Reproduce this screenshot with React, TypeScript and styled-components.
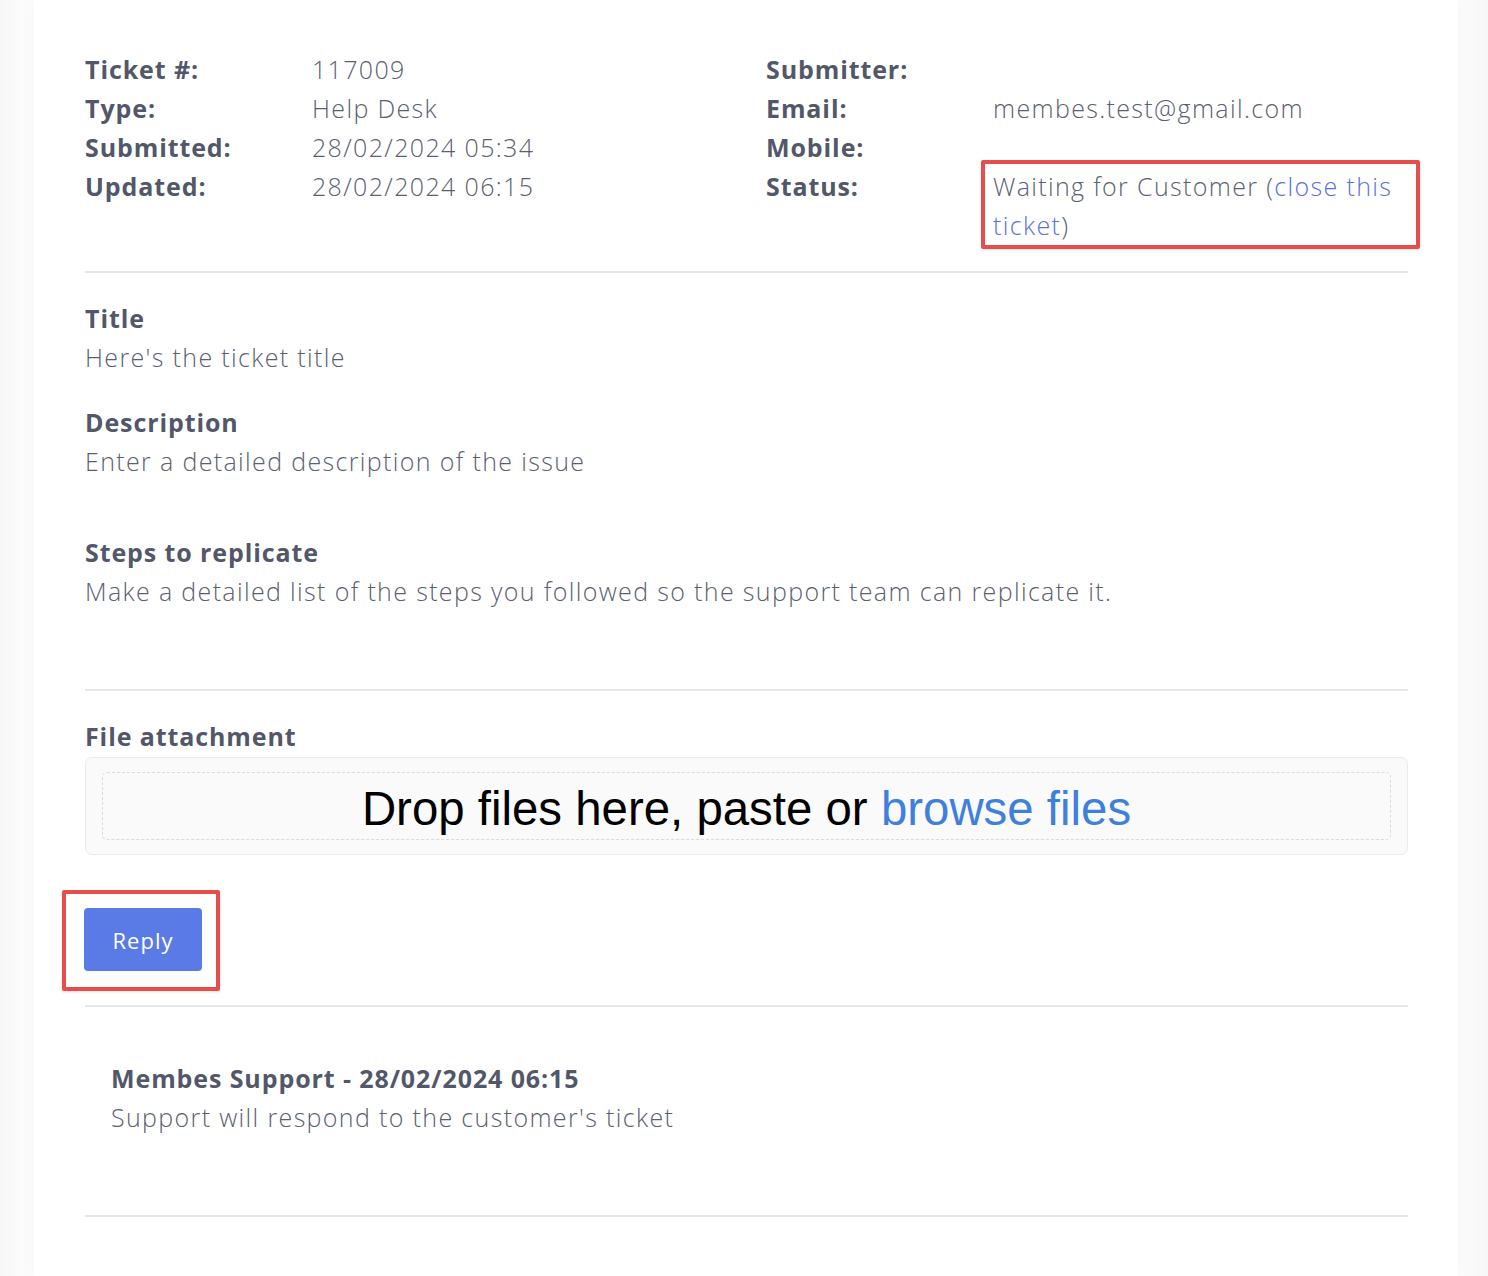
import React from "react";
import styled, { createGlobalStyle } from "styled-components";

const GlobalStyle = createGlobalStyle`
  html, body { margin: 0; padding: 0; background: #ffffff; }
  body { font-family: "Open Sans", "Noto Sans", sans-serif; }
  * { box-sizing: border-box; }
`;

const Page = styled.div`
  display: flex;
  justify-content: flex-start;
  padding: 0 30px 0 34px;
  min-height: 1276px;
  background: linear-gradient(90deg, #f7f7f7 0, #fdfdfd 34px, #fdfdfd calc(100% - 34px), #f7f7f7 100%);
`;

const Card = styled.main`
  width: 1424px;
  min-height: 1276px;
  background: #ffffff;
  box-shadow: 0 0 14px rgba(0, 0, 0, 0.035);
  padding: 50px 50px 0 51px;
  color: #5b5f72;
  font-size: 25px;
  line-height: 39px;
`;

const MetaGrid = styled.section`
  display: grid;
  grid-template-columns: 1fr 1fr;
  column-gap: 39px;
`;

const InfoTable = styled.dl`
  display: grid;
  grid-template-columns: 227px 1fr;
  margin: 0;
  align-content: start;
`;

const Label = styled.dt`
  margin: 0;
  font-weight: 700;
  letter-spacing: 0.9px;
  color: #525769;
`;

const Value = styled.dd`
  margin: 0;
  font-weight: 300;
  letter-spacing: 1.35px;
  color: #5b5f72;
  min-height: 39px;
  position: relative;
`;

const Highlight = styled.span`
  position: relative;
  display: block;
  &::after {
    content: "";
    position: absolute;
    top: -7px;
    bottom: -4px;
    left: -12px;
    right: -12px;
    border: 4px solid #e64d4d;
    border-radius: 2px;
    box-shadow: 0 1px 3px rgba(0, 0, 0, 0.12);
    pointer-events: none;
  }
`;

const Link = styled.a`
  color: #5b6fe0;
  text-decoration: none;
`;

const Divider = styled.hr<{ $top: number; $bottom: number }>`
  border: 0;
  height: 2px;
  background: #e6e6e6;
  margin: ${(p) => p.$top}px 0 ${(p) => p.$bottom}px;
`;

const Field = styled.div<{ $after?: number; $indent?: number }>`
  margin-bottom: ${(p) => p.$after ?? 0}px;
  padding-left: ${(p) => p.$indent ?? 0}px;
`;

const FieldLabel = styled.div`
  font-weight: 700;
  letter-spacing: 0.9px;
  color: #525769;
`;

const FieldValue = styled.div`
  font-weight: 300;
  letter-spacing: 1.35px;
  color: #5b5f72;
`;

const DropZone = styled.div`
  margin-top: 1px;
  height: 98px;
  background: #fafafa;
  border: 1px solid #eaeaea;
  border-radius: 7px;
  padding: 14px 16px;
`;

const DropInner = styled.div`
  height: 100%;
  border: 1px dashed #dadada;
  border-radius: 5px;
  display: flex;
  align-items: center;
  justify-content: center;
  font-family: "Liberation Sans", Arial, sans-serif;
  font-size: 47.4px;
  line-height: 1;
  letter-spacing: 0;
  color: #000000;
  padding-top: 6px;
`;

const Browse = styled.span`
  color: #3e80dc;
  margin-left: 0.28em;
`;

const ButtonRow = styled.div`
  display: flex;
  margin-top: 53px;
  margin-left: -1px;
`;

const ButtonHighlight = styled.div`
  position: relative;
  &::after {
    content: "";
    position: absolute;
    top: -18px;
    bottom: -20px;
    left: -22px;
    right: -18px;
    border: 4px solid #e64d4d;
    border-radius: 2px;
    box-shadow: 0 1px 3px rgba(0, 0, 0, 0.12);
    pointer-events: none;
  }
`;

const ReplyButton = styled.button`
  width: 118px;
  height: 63px;
  border: 0;
  border-radius: 4px;
  background: #5a7be6;
  color: #ffffff;
  font-family: "Open Sans", "Noto Sans", sans-serif;
  font-size: 22px;
  font-weight: 400;
  letter-spacing: 1px;
  cursor: pointer;
`;

const leftRows: [string, string][] = [
  ["Ticket #:", "117009"],
  ["Type:", "Help Desk"],
  ["Submitted:", "28/02/2024 05:34"],
  ["Updated:", "28/02/2024 06:15"],
];

export default function App() {
  return (
    <>
      <GlobalStyle />
      <Page>
        <Card>
          <MetaGrid>
            <InfoTable>
              {leftRows.map(([l, v]) => (
                <React.Fragment key={l}>
                  <Label>{l}</Label>
                  <Value>{v}</Value>
                </React.Fragment>
              ))}
            </InfoTable>
            <InfoTable>
              <Label>Submitter:</Label>
              <Value />
              <Label>Email:</Label>
              <Value>membes.test@gmail.com</Value>
              <Label>Mobile:</Label>
              <Value />
              <Label>Status:</Label>
              <Value>
                <Highlight>
                  Waiting for Customer (<Link href="#">close this ticket</Link>)
                </Highlight>
              </Value>
            </InfoTable>
          </MetaGrid>

          <Divider $top={26} $bottom={26} />

          <Field $after={26}>
            <FieldLabel>Title</FieldLabel>
            <FieldValue>Here's the ticket title</FieldValue>
          </Field>
          <Field $after={52}>
            <FieldLabel>Description</FieldLabel>
            <FieldValue>Enter a detailed description of the issue</FieldValue>
          </Field>
          <Field $after={0}>
            <FieldLabel>Steps to replicate</FieldLabel>
            <FieldValue>
              Make a detailed list of the steps you followed so the support team can replicate it.
            </FieldValue>
          </Field>

          <Divider $top={78} $bottom={26} />

          <Field>
            <FieldLabel>File attachment</FieldLabel>
            <DropZone>
              <DropInner>
                Drop files here, paste or<Browse>browse files</Browse>
              </DropInner>
            </DropZone>
          </Field>

          <ButtonRow>
            <ButtonHighlight>
              <ReplyButton type="button">Reply</ReplyButton>
            </ButtonHighlight>
          </ButtonRow>

          <Divider $top={34} $bottom={52} />

          <Field $indent={26}>
            <FieldLabel>Membes Support - 28/02/2024 06:15</FieldLabel>
            <FieldValue>Support will respond to the customer's ticket</FieldValue>
          </Field>

          <Divider $top={78} $bottom={0} />
        </Card>
      </Page>
    </>
  );
}
